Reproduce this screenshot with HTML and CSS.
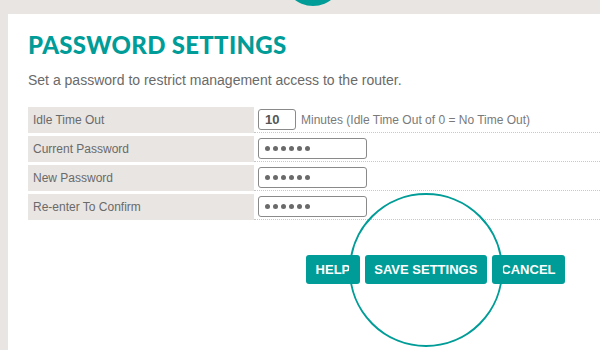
FILE: index.html
```html
<!DOCTYPE html>
<html lang="en">
<head>
<meta charset="utf-8">
<title>Password Settings</title>
<link rel="stylesheet" href="styles.css">
</head>
<body>
<div class="top-dot"></div>
<main class="panel">
  <h1 class="title">PASSWORD SETTINGS</h1>
  <p class="intro">Set a password to restrict management access to the router.</p>
  <div class="form">
    <div class="label">Idle Time Out</div>
    <div class="value"><div class="field field-short">10</div><span class="hint">Minutes (Idle Time Out of 0 = No Time Out)</span></div>
    <div class="label">Current Password</div>
    <div class="value"><div class="field field-pass"><i></i><i></i><i></i><i></i><i></i><i></i></div></div>
    <div class="label">New Password</div>
    <div class="value"><div class="field field-pass"><i></i><i></i><i></i><i></i><i></i><i></i></div></div>
    <div class="label">Re-enter To Confirm</div>
    <div class="value"><div class="field field-pass"><i></i><i></i><i></i><i></i><i></i><i></i></div></div>
  </div>
  <div class="actions">
    <button class="btn">HELP</button>
    <button class="btn btn-save">SAVE SETTINGS</button>
    <button class="btn">CANCEL</button>
  </div>
</main>
</body>
</html>
```
FILE: styles.css
```css
html, body {
  margin: 0;
  padding: 0;
}
body {
  background: #e9e5e2;
  font-family: "Liberation Sans", Arial, sans-serif;
  color: #6a6a6a;
  width: 600px;
  height: 350px;
  overflow: hidden;
  position: relative;
}
.top-dot {
  position: absolute;
  left: 283px;
  top: -54px;
  width: 60px;
  height: 60px;
  border-radius: 50%;
  background: #009c97;
}
.panel {
  margin: 14px 0 0 8px;
  background: #fff;
  height: 336px;
  padding: 17px 0 0 20px;
  box-sizing: border-box;
}
.title {
  margin: 0;
  font-family: Lato, "Noto Sans", sans-serif;
  font-weight: 900;
  font-size: 24px;
  line-height: 28px;
  color: #009c97;
  letter-spacing: 0.3px;
}
.intro {
  margin: 13px 0 0;
  font-size: 14px;
  line-height: 16px;
  color: #6a6a6a;
}
.form {
  margin-top: 19px;
  display: grid;
  grid-template-columns: 226px 1fr;
  row-gap: 3px;
}
.label {
  background: #e9e5e2;
  height: 26px;
  display: flex;
  align-items: center;
  padding-left: 5px;
  font-size: 12px;
  color: #6a6a6a;
}
.value {
  height: 26px;
  box-sizing: border-box;
  border-bottom: 1px dotted #c8c8c8;
  display: flex;
  align-items: center;
  padding-left: 4px;
}
.field {
  height: 21px;
  box-sizing: border-box;
  border: 1px solid #8a8a8a;
  border-radius: 3px;
  background: #fff;
  display: flex;
  align-items: center;
}
.field-short {
  width: 38px;
  padding-left: 6px;
  font-size: 13px;
  font-weight: bold;
  color: #555;
}
.field-pass {
  width: 109px;
  padding-left: 6px;
  gap: 3px;
}
.field-pass i {
  width: 5px;
  height: 5px;
  border-radius: 50%;
  background: #6a6a6a;
}
.hint {
  margin-left: 5px;
  font-size: 12px;
  color: #7a7a7a;
}
.actions {
  margin-top: 35px;
  display: flex;
  justify-content: flex-end;
  gap: 5px;
  padding-right: 35px;
}
.btn {
  height: 29px;
  padding: 0 9.5px;
  border: none;
  border-radius: 3px;
  background: #009c97;
  color: #fff;
  font-family: "Liberation Sans", Arial, sans-serif;
  font-weight: bold;
  font-size: 13px;
}
.btn-save {
  position: relative;
}
.btn-save::after {
  content: "";
  position: absolute;
  left: 50%;
  top: 50%;
  width: 154px;
  height: 154px;
  margin: -77px 0 0 -77px;
  box-sizing: border-box;
  border: 2px solid #009c97;
  border-radius: 50%;
  pointer-events: none;
  z-index: 2;
}
```
